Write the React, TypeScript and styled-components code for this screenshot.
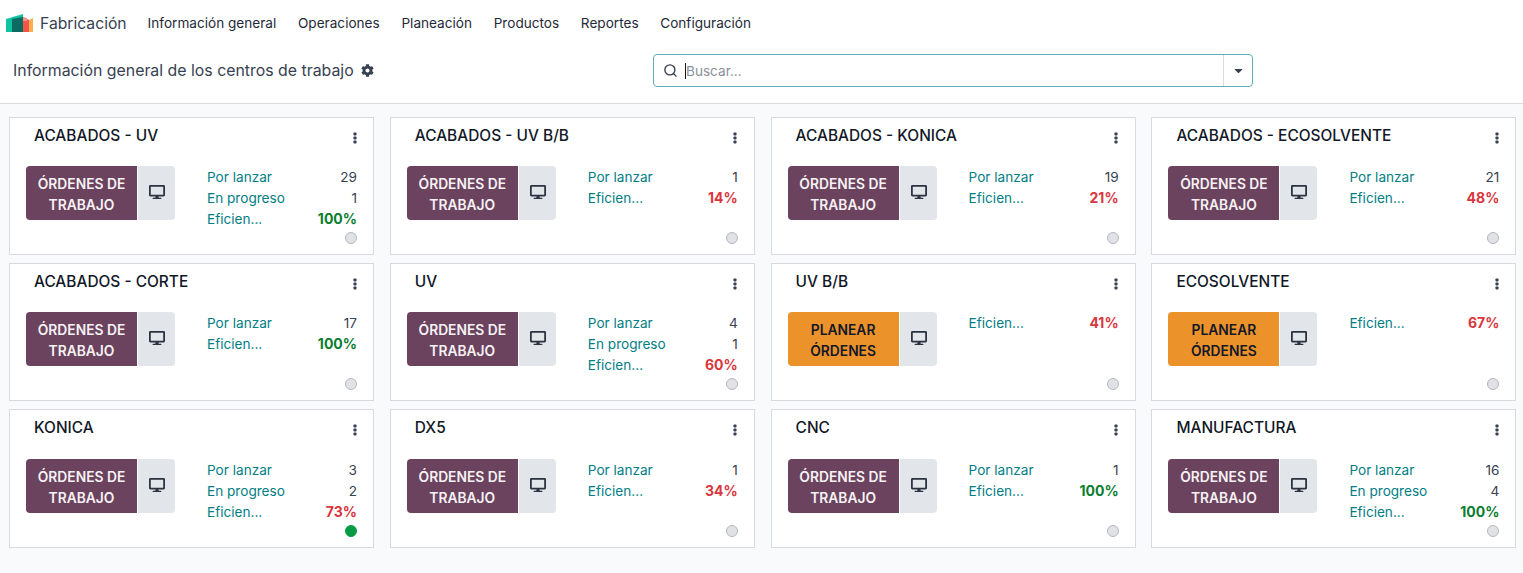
import React from 'react';
import styled, { createGlobalStyle } from 'styled-components';
import { FaCog, FaDesktop, FaCaretDown } from 'react-icons/fa';
import { Search } from 'lucide-react';

const GlobalStyle = createGlobalStyle`
    html, body {
        margin: 0;
        padding: 0;
        background: #f9fafb;
        font-family: "Inter", "Liberation Sans", sans-serif;
        color: #374151;
    }
`;

const Page = styled.div`
    width: 1523px;
    height: 573px;
    overflow: hidden;
    display: flex;
    flex-direction: column;
`;

const NavBar = styled.nav`
    height: 46px;
    background: #fff;
    display: flex;
    align-items: center;
    padding-left: 6px;
`;

const Brand = styled.span`
    font-size: 15.7px;
    color: #374151;
    margin: 0 21px 0 7px;
`;

const NavItem = styled.span`
    font-size: 13.6px;
    color: #1f2937;
    margin-right: 21.7px;
`;

const ControlPanel = styled.div`
    height: 57px;
    background: #fff;
    border-bottom: 1px solid #d8dadd;
    display: grid;
    grid-template-columns: 653px 600px;
    align-items: start;
`;

const PageTitle = styled.div`
    display: flex;
    align-items: center;
    gap: 7px;
    padding: 15px 0 0 13px;
    font-size: 15.86px;
    line-height: 19px;
    color: #374151;
`;

const SearchBox = styled.div`
    height: 33px;
    margin-top: 8px;
    box-sizing: border-box;
    border: 1px solid #5fb0b5;
    border-radius: 4px;
    display: flex;
    align-items: center;
    padding-left: 9px;
`;

const Caret = styled.span`
    width: 1px;
    height: 16px;
    background: #111827;
    margin-left: 7px;
`;

const Placeholder = styled.span`
    flex: 1;
    font-size: 13.6px;
    color: #8b9099;
`;

const DropToggle = styled.span`
    width: 28px;
    height: 100%;
    border-left: 1px solid #d8dadd;
    display: flex;
    align-items: center;
    justify-content: center;
    color: #374151;
`;

const Board = styled.main`
    display: grid;
    grid-template-columns: repeat(4, 365px);
    grid-template-rows: 138px 138px 139px;
    column-gap: 15.8px;
    row-gap: 8px;
    padding: 13px 0 0 9px;
`;

const Card = styled.article`
    box-sizing: border-box;
    background: #fff;
    border: 1px solid #d8dadd;
    display: flex;
    flex-direction: column;
    padding: 7px 16px 10px 16px;
`;

const CardHead = styled.header`
    flex: 1 0 41px;
    display: flex;
    justify-content: space-between;
    align-items: flex-start;
`;

const CardTitle = styled.h3`
    margin: 1px 0 0 8px;
    font-size: 15.45px;
    line-height: 20px;
    font-weight: 500;
    color: #111827;
`;

const MenuDots = styled.svg`
    margin: 7px 0.5px 0 0;
    color: #374151;
`;

const CardBody = styled.div`
    display: grid;
    grid-template-columns: 149px 1fr;
    column-gap: 32px;
    height: 54px;
`;

const Actions = styled.div`
    display: flex;
    height: 54px;
`;

const MainButton = styled.button<{ $variant: 'work' | 'plan' }>`
    width: 111px;
    border: 0;
    padding: 3px 4px 0;
    border-radius: 4px 0 0 4px;
    font-family: inherit;
    font-size: 13.8px;
    line-height: 21px;
    font-weight: 600;
    background: ${({ $variant }) => ($variant === 'work' ? '#6b435e' : '#ec922b')};
    color: ${({ $variant }) => ($variant === 'work' ? '#f6f2f4' : '#111827')};
`;

const ScreenButton = styled.button`
    width: 37px;
    margin-left: 1px;
    border: 0;
    padding: 0 0 2px 1px;
    border-radius: 0 4px 4px 0;
    background: #e2e5ea;
    color: #2b3240;
    display: flex;
    align-items: center;
    justify-content: center;
`;

const Stats = styled.div`
    display: flex;
    flex-direction: column;
    padding-top: 1px;
`;

const StatRow = styled.div`
    display: flex;
    flex: 0 0 21px;
    justify-content: space-between;
    height: 21px;
    line-height: 21px;
    font-size: 13.6px;
`;

const StatLabel = styled.span`
    color: #017e84;
`;

const StatValue = styled.span<{ $tone?: 'good' | 'bad' }>`
    color: ${({ $tone }) => ($tone === 'good' ? '#0b7d2f' : $tone === 'bad' ? '#d9363e' : '#374151')};
    font-weight: ${({ $tone }) => ($tone ? 700 : 400)};
    font-size: ${({ $tone }) => ($tone ? '14px' : '13.6px')};
    line-height: ${({ $tone }) => ($tone ? '20px' : '21px')};
`;

const Footer = styled.footer`
    flex: 0 0 24px;
    display: flex;
    justify-content: flex-end;
    align-items: flex-end;
`;

const Status = styled.span<{ $on?: boolean }>`
    box-sizing: border-box;
    width: 12px;
    height: 12px;
    border-radius: 50%;
    background: ${({ $on }) => ($on ? '#069a45' : '#e0e2e6')};
    border: 1px solid ${({ $on }) => ($on ? '#069a45' : '#b4b8bf')};
`;

type Center = {
    name: string;
    plan?: boolean;
    toLaunch?: number;
    inProgress?: number;
    efficiency: number;
    on?: boolean;
};

const centers: Center[] = [
    { name: 'ACABADOS - UV', toLaunch: 29, inProgress: 1, efficiency: 100 },
    { name: 'ACABADOS - UV B/B', toLaunch: 1, efficiency: 14 },
    { name: 'ACABADOS - KONICA', toLaunch: 19, efficiency: 21 },
    { name: 'ACABADOS - ECOSOLVENTE', toLaunch: 21, efficiency: 48 },
    { name: 'ACABADOS - CORTE', toLaunch: 17, efficiency: 100 },
    { name: 'UV', toLaunch: 4, inProgress: 1, efficiency: 60 },
    { name: 'UV B/B', plan: true, efficiency: 41 },
    { name: 'ECOSOLVENTE', plan: true, efficiency: 67 },
    { name: 'KONICA', toLaunch: 3, inProgress: 2, efficiency: 73, on: true },
    { name: 'DX5', toLaunch: 1, efficiency: 34 },
    { name: 'CNC', toLaunch: 1, efficiency: 100 },
    { name: 'MANUFACTURA', toLaunch: 16, inProgress: 4, efficiency: 100 },
];

const menu = ['Información general', 'Operaciones', 'Planeación', 'Productos', 'Reportes', 'Configuración'];

const Logo = () => (
    <svg width="27" height="18" viewBox="0 0 27 18">
        <polygon points="0,5 17,0 17,18 0,18" fill="#0fc4a4" />
        <polygon points="6,5 17,3 17,18 6,18" fill="#0b6b60" />
        <polygon points="17,3 23,6 23,18 17,18" fill="#f2564a" />
        <polygon points="17,3 21,4 21,7 17,7" fill="#fb8f8f" />
        <polygon points="23,6 27,4 27,18 23,18" fill="#fbb04d" />
    </svg>
);

const Kebab = () => (
    <MenuDots width="4" height="12" viewBox="0 0 4 12" fill="currentColor">
        <rect x="0.5" y="0.5" width="3" height="3" rx="0.7" />
        <rect x="0.5" y="4.5" width="3" height="3" rx="0.7" />
        <rect x="0.5" y="8.5" width="3" height="3" rx="0.7" />
    </MenuDots>
);

const WorkCenterCard: React.FC<{ center: Center }> = ({ center }) => (
    <Card>
        <CardHead>
            <CardTitle>{center.name}</CardTitle>
            <Kebab />
        </CardHead>
        <CardBody>
            <Actions>
                <MainButton $variant={center.plan ? 'plan' : 'work'}>
                    {center.plan ? 'PLANEAR ÓRDENES' : 'ÓRDENES DE TRABAJO'}
                </MainButton>
                <ScreenButton>
                    <FaDesktop size={16} />
                </ScreenButton>
            </Actions>
            <Stats>
                {center.toLaunch !== undefined && (
                    <StatRow>
                        <StatLabel>Por lanzar</StatLabel>
                        <StatValue>{center.toLaunch}</StatValue>
                    </StatRow>
                )}
                {center.inProgress !== undefined && (
                    <StatRow>
                        <StatLabel>En progreso</StatLabel>
                        <StatValue>{center.inProgress}</StatValue>
                    </StatRow>
                )}
                <StatRow>
                    <StatLabel>Eficien...</StatLabel>
                    <StatValue $tone={center.efficiency >= 100 ? 'good' : 'bad'}>{center.efficiency}%</StatValue>
                </StatRow>
            </Stats>
        </CardBody>
        <Footer>
            <Status $on={center.on} />
        </Footer>
    </Card>
);

export default function App() {
    return (
        <Page>
            <GlobalStyle />
            <NavBar>
                <Logo />
                <Brand>Fabricación</Brand>
                {menu.map(item => (
                    <NavItem key={item}>{item}</NavItem>
                ))}
            </NavBar>
            <ControlPanel>
                <PageTitle>
                    Información general de los centros de trabajo
                    <FaCog size={13} />
                </PageTitle>
                <SearchBox>
                    <Search size={15} strokeWidth={2.2} />
                    <Caret />
                    <Placeholder>Buscar...</Placeholder>
                    <DropToggle>
                        <FaCaretDown size={13} />
                    </DropToggle>
                </SearchBox>
            </ControlPanel>
            <Board>
                {centers.map(center => (
                    <WorkCenterCard key={center.name} center={center} />
                ))}
            </Board>
        </Page>
    );
}
